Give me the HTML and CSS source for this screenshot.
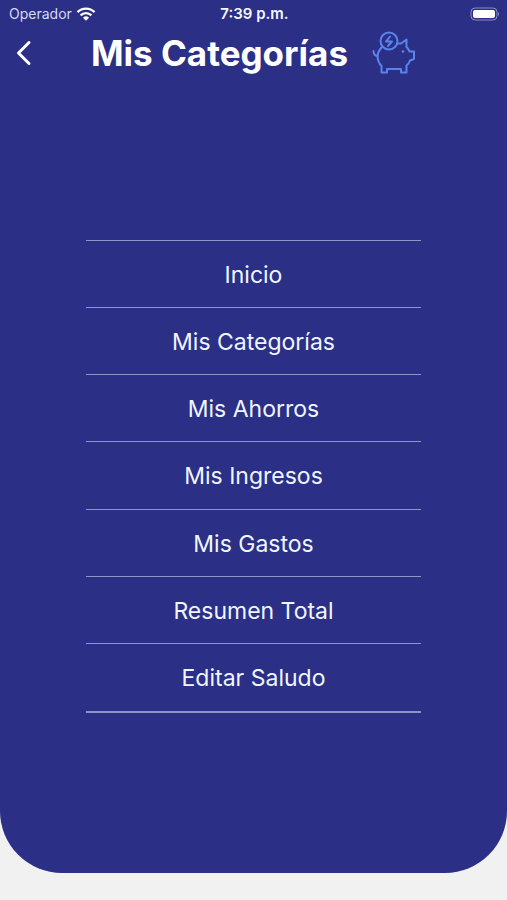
FILE: index.html
```html
<!DOCTYPE html>
<html lang="es">
<head>
  <meta charset="UTF-8" />
  <meta name="viewport" content="width=device-width, initial-scale=1.0"/>
  <title>Mis Categorías</title>
  <link rel="stylesheet" href="styles.css">
</head>
<body>
  <div class="panel">
    <div class="status-bar">
      <div class="carrier">
        <span>Operador</span>
        <svg class="wifi" viewBox="0 0 20 14" aria-hidden="true">
          <path d="M1.5 5.2a12 12 0 0 1 17 0M4.6 8.4a7.6 7.6 0 0 1 10.8 0" />
          <path class="wifi-dot" d="M10 13.8l-3-3a4.3 4.3 0 0 1 6 0z" />
        </svg>
      </div>
      <time class="clock">7:39 p.m.</time>
      <svg class="battery" viewBox="0 0 30 14" aria-hidden="true">
        <rect class="battery-case" x="1" y="1" width="26" height="12" rx="4" />
        <rect class="battery-level" x="3" y="3" width="22" height="8" rx="2" />
        <path class="battery-tip" d="M28 5q2 2 0 4z" />
      </svg>
    </div>

    <header>
      <button class="back-btn" type="button" aria-label="Volver">
        <svg viewBox="0 0 16 26" aria-hidden="true"><path d="M13 2.500L2.500 13L13 23.500" /></svg>
      </button>
      <div class="title">
        <h1>Mis Categorías</h1>
        <svg class="piggy" viewBox="0 0 44 44" aria-hidden="true">
          <circle cx="17" cy="10" r="8.500" />
          <path d="M18 5.500L14 10.500H20L16 15" />
          <path d="M25.500 12.500H29L34.500 8.500V16Q36.500 18 37.500 20.500H42V28L38 29.500Q37 32.500 34.500 34.500V41.500H29V38H15V41.500H9.500V35Q6 31.500 5.500 26Q5.500 21 9.500 16.500" />
          <path d="M5.500 25Q1.500 24.500 1.500 20" />
          <circle class="piggy-eye" cx="31" cy="20.500" r="1.300" />
        </svg>
      </div>
    </header>

    <nav>
      <ul class="menu">
        <li><a href="#inicio">Inicio</a></li>
        <li><a href="#categorias">Mis Categorías</a></li>
        <li><a href="#ahorros">Mis Ahorros</a></li>
        <li><a href="#ingresos">Mis Ingresos</a></li>
        <li><a href="#gastos">Mis Gastos</a></li>
        <li><a href="#resumen">Resumen Total</a></li>
        <li><a href="#saludo">Editar Saludo</a></li>
      </ul>
    </nav>
  </div>
</body>
</html>
```

FILE: styles.css
```css
* {
  box-sizing: border-box;
}
body {
  margin: 0;
  min-height: 100vh;
  padding-bottom: 27px;
  display: flex;
  flex-direction: column;
  font-family: Inter, 'Liberation Sans', sans-serif;
  background: #f1f1f1;
  color: #f4f8ff;
}
.panel {
  flex: 1;
  display: flex;
  flex-direction: column;
  background: #2b2f86;
  border-radius: 0 0 62px 62px;
}
.status-bar {
  display: grid;
  grid-template-columns: 1fr auto 1fr;
  align-items: center;
  height: 27px;
  padding: 0 7px 0 9px;
  font-size: 15px;
  line-height: 18px;
}
.carrier {
  display: flex;
  align-items: center;
  gap: 4px;
  font-size: 14px;
  color: #d5daf5;
}
.wifi {
  width: 20px;
  height: 14px;
  fill: none;
  stroke: #fff;
  stroke-width: 2.4;
}
.wifi-dot {
  fill: #fff;
  stroke: none;
}
.clock {
  font-weight: 600;
}
.battery {
  width: 30px;
  height: 14px;
  justify-self: end;
}
.battery-case {
  fill: none;
  stroke: #8b8ec4;
}
.battery-level {
  fill: #fff;
}
.battery-tip {
  fill: #8b8ec4;
}
header {
  display: grid;
  grid-template-columns: 1fr auto 1fr;
  align-items: center;
  height: 52px;
  padding: 0 16px;
}
.back-btn {
  justify-self: start;
  display: flex;
  padding: 0;
  border: none;
  background: none;
  cursor: pointer;
}
.back-btn svg {
  width: 16px;
  height: 26px;
  fill: none;
  stroke: #fff;
  stroke-width: 3;
  stroke-linecap: round;
  stroke-linejoin: round;
}
.title {
  display: flex;
  align-items: center;
  gap: 24px;
}
h1 {
  margin: 0;
  font-size: 35px;
  line-height: 44px;
  font-weight: 700;
  color: #fff;
}
.piggy {
  width: 44px;
  height: 44px;
  fill: none;
  stroke: #5b83ee;
  stroke-width: 2;
  stroke-linejoin: round;
  stroke-linecap: round;
}
.piggy .piggy-eye {
  fill: #5b83ee;
  stroke: none;
}
nav {
  flex: 1;
  display: flex;
  align-items: center;
  justify-content: center;
}
.menu {
  display: flex;
  flex-direction: column;
  width: 66%;
  height: 473px;
  margin: 0;
  padding: 0;
  list-style: none;
  border-bottom: 2px solid #8d92c6;
}
.menu li {
  flex: 1;
  display: flex;
  border-top: 1px solid #9195c6;
}
.menu a {
  flex: 1;
  display: flex;
  align-items: center;
  justify-content: center;
  padding-top: 2px;
  color: #eff6ff;
  font-size: 23px;
  line-height: 32px;
  text-decoration: none;
}
```
